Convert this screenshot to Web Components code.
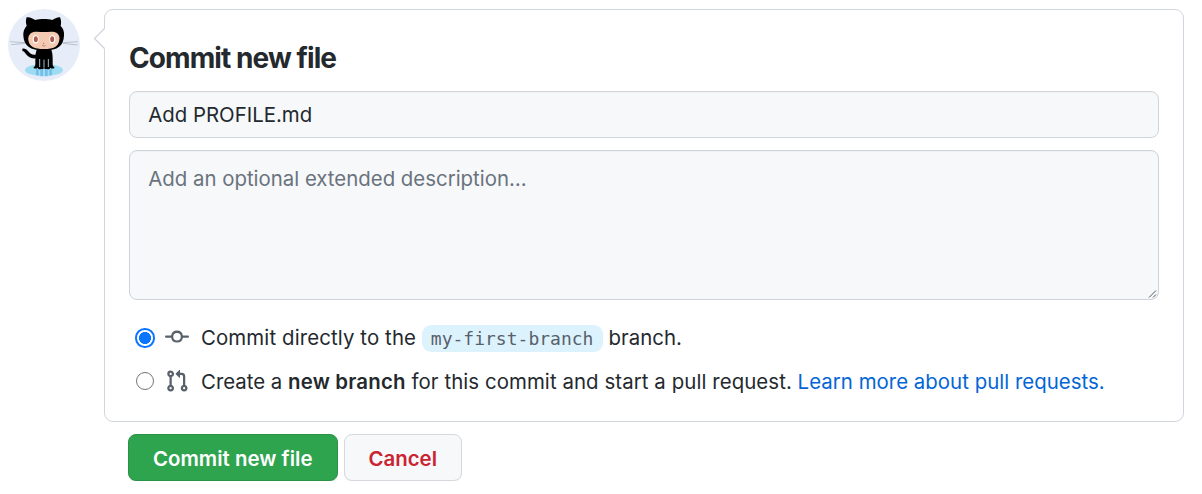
<!DOCTYPE html>
<html lang="en">
<head>
<meta charset="utf-8">
<title>Commit new file</title>
<style>
html,body{margin:0;background:#fff}
body{font-family:Inter,"Liberation Sans",sans-serif;font-size:20.4px;color:#24292e;overflow:hidden}
</style>
</head>
<body>
<commit-form></commit-form>
<script>
const define = (name, html) => customElements.define(name, class extends HTMLElement {
  constructor() {
    super();
    this.attachShadow({ mode: 'open' }).innerHTML = html;
  }
});

define('user-avatar', `
<style>:host{display:block;width:72px;height:72px;flex:none}svg{display:block}</style>
<svg width="72" height="72" viewBox="24 27 216 216">
  <circle cx="132" cy="135" r="108" fill="#e6edf8"/>
  <ellipse cx="132" cy="210" rx="57" ry="18.5" fill="#9ddcf3"/>
  <path d="M108 206h8v21l-8-2zM121 208h8v21h-8zM135 208h8v21h-8zM148 206h8v19l-8 2z" fill="#77bde9"/>
  <path d="M67 146c8-1 13 2 17 7 6 8 13 13 25 11l2 10c-16 4-27-3-34-13-3-5-6-8-10-9z"/>
  <path d="M112 145h40c5 10 6 20 6 34v14c0 5 3 8 6 10-4 4-10 3-13 0-2 5-8 5-12 4-3 1-5 0-7-2-2 2-4 3-7 2-4 1-10 1-12-4-3 3-9 4-13 0 3-2 6-5 6-10v-14c0-14 1-24 6-34z"/>
  <path d="M119 177v24M132 179v24M145 177v24" stroke="#a5bccd" stroke-width="3"/>
  <path d="M80 52c8-2 20 4 26 8 14-4 37-4 51 0 7-5 18-10 23-8 4 9 4 18 2 26 8 8 11 17 10 29-2 30-17 44-60 44s-60-14-62-44c-1-12 3-22 10-30-3-8-3-17 0-25z"/>
  <path d="M101 96c9-2 20 0 31 0s22-2 31 0c12 3 17 12 15 24-3 20-16 27-46 27s-44-7-47-27c-1-12 4-21 16-24z" fill="#f4cbb2"/>
  <ellipse cx="107" cy="118" rx="9" ry="12.500" fill="#fff"/><ellipse cx="157" cy="118" rx="9" ry="12.500" fill="#fff"/>
  <ellipse cx="107.500" cy="118" rx="6" ry="9" fill="#ad5c51"/><ellipse cx="156.500" cy="118" rx="6" ry="9" fill="#ad5c51"/>
  <circle cx="131" cy="130" r="2" fill="#ad5c51"/><path d="M126 136q5.500 5 11 0" stroke="#ad5c51" stroke-width="2" fill="none"/>
  <path d="M75 128l-45-3M76 130l-43 4M188 128l46-3M188 130l45 5" stroke="#8d949e" stroke-width="1.500"/>
  <circle cx="67" cy="156" r="1.700" fill="#8bd6ef"/>
</svg>`);

define('speech-card', `
<style>
:host{display:block;box-sizing:border-box;position:relative;width:1080px;height:413px;border:1px solid #d1d5de;border-radius:9px;padding:32px 24px 0;background:#fff}
.tip{position:absolute;left:-12px;top:17px;display:block}
</style>
<svg class="tip" width="13" height="24" viewBox="0 0 13 24"><path d="M12.500 1L1.500 11.500 12.500 22.500z" fill="#fff"/><path d="M11.500 1.500L1.500 11.500l10 10" fill="none" stroke="#d0d5dd" stroke-width="1.400"/></svg>
<slot></slot>`);

define('form-title', `
<style>:host{display:block;font-size:28px;font-weight:700;line-height:32px;letter-spacing:-.920px;white-space:nowrap}</style><slot></slot>`);

define('text-field', `
<style>
:host{display:block;box-sizing:border-box;position:relative;border:1px solid #d1d5da;border-radius:8px;background:#f6f8fa;box-shadow:inset 0 1px 0 rgba(225,228,232,.3);padding:0 18.200px;height:47px;line-height:45px;white-space:nowrap}
:host([multiline]){height:150px;line-height:30px;padding-top:13px;color:#6a737d;border-color:#ccd3dd}
svg{display:none;position:absolute;right:0;bottom:0}
:host([multiline]) svg{display:block}
</style>
<slot></slot>
<svg width="10" height="10" viewBox="0 0 10 10"><path d="M1 8.500L8 1.500M5 8.500L8 5.500" stroke="#555" stroke-width="1" fill="none"/></svg>`);

define('radio-dot', `
<style>
:host{display:flex;align-items:center;justify-content:center;width:20px;height:20px;flex:none}
i{box-sizing:border-box;display:block;width:18px;height:18px;border:1.300px solid #767676;border-radius:50%;background:#fff}
:host([checked]) i{width:19.500px;height:19.500px;border:2px solid #0a75ff;background:radial-gradient(circle,#0a75ff 5.700px,#fff 6.300px)}
</style><i></i>`);

define('choice-row', `
<style>
:host{display:flex;align-items:center;height:44px;padding-left:6px;white-space:nowrap}
.icon{width:24px;height:24px;margin:0 12px 0 10px;display:flex;color:#586069}
:host([raised-icon]) .icon{margin-bottom:2px}
::slotted(svg){display:block}
</style>
<slot name="control"></slot><span class="icon"><slot name="icon"></slot></span><span><slot></slot></span>`);

define('branch-name', `
<style>:host{display:inline-block;font:18px/27px "DejaVu Sans Mono",monospace;color:#586069;background:#dcf3fe;border-radius:9px;padding:0 9px;height:27px;vertical-align:0;box-sizing:border-box;width:181px}</style><slot></slot>`);

define('push-button', `
<style>
:host{display:block;width:118px}
:host([primary]){width:210px}
button{display:block;box-sizing:border-box;width:100%;height:47px;border:1px solid #d5d8dc;border-radius:8px;background:#f6f8fa;color:#cb2431;font:600 20.400px Inter,"Liberation Sans",sans-serif;letter-spacing:.030px;padding:2px .500px 0 0;white-space:nowrap;box-shadow:0 1px 0 rgba(27,31,35,.04)}
:host([primary]) button{background:#2ea44f;border-color:#2a9247;color:#fff;box-shadow:0 1px 0 rgba(27,31,35,.1)}
</style><button type="button"><slot></slot></button>`);

define('commit-form', `
<style>
:host{display:flex;gap:24px;padding:9px 0 0 8px;align-items:flex-start}
text-field{margin-top:17px}
text-field[multiline]{margin-top:12px}
.choices{margin-top:16px}
.pull{height:42px}
.actions{display:flex;gap:6px;padding:12px 0 0 24px}
a{color:#0366d6;text-decoration:none;letter-spacing:.030px}
b{font-weight:600;letter-spacing:.200px}
.direct{letter-spacing:.120px}
.rest{letter-spacing:.080px}
</style>
<user-avatar></user-avatar>
<div>
  <speech-card>
    <form-title>Commit new file</form-title>
    <text-field>Add PROFILE.md</text-field>
    <text-field multiline>Add an optional extended description…</text-field>
    <div class="choices">
      <choice-row raised-icon>
        <radio-dot slot="control" checked></radio-dot>
        <svg slot="icon" width="24" height="24" viewBox="0 0 16 16" fill="currentColor"><path fill-rule="evenodd" d="M10.500 7.750a2.500 2.500 0 11-5 0 2.500 2.500 0 015 0zm1.430.750a4.002 4.002 0 01-7.860 0H.750a.750.750 0 110-1.500h3.320a4.001 4.001 0 017.860 0h3.320a.750.750 0 110 1.500h-3.320z"/></svg>
        <span class="direct">Commit directly to the</span> <branch-name>my-first-branch</branch-name> <span>branch.</span>
      </choice-row>
      <choice-row class="pull">
        <radio-dot slot="control"></radio-dot>
        <svg slot="icon" width="24" height="24" viewBox="0 0 16 16" fill="currentColor"><path fill-rule="evenodd" d="M7.177 3.073L9.573.677A.250.250 0 0110 .854v4.792a.250.250 0 01-.427.177L7.177 3.427a.250.250 0 010-.354zM3.750 2.500a.750.750 0 100 1.500.750.750 0 000-1.500zm-2.250.750a2.250 2.250 0 113 2.122v5.256a2.251 2.251 0 11-1.500 0V5.372A2.250 2.250 0 011.500 3.250zM11 2.500h-1V4h1a1 1 0 011 1v5.628a2.251 2.251 0 101.500 0V5A2.500 2.500 0 0011 2.500zm1 10.250a.750.750 0 111.500 0 .750.750 0 01-1.500 0zM3.750 12a.750.750 0 100 1.500.750.750 0 000-1.500z"/></svg>
        Create a <b>new branch</b> <span class="rest">for this commit and start a pull request.</span> <a>Learn more about pull requests.</a>
      </choice-row>
    </div>
  </speech-card>
  <div class="actions">
    <push-button primary>Commit new file</push-button>
    <push-button>Cancel</push-button>
  </div>
</div>`);
</script>
</body>
</html>
